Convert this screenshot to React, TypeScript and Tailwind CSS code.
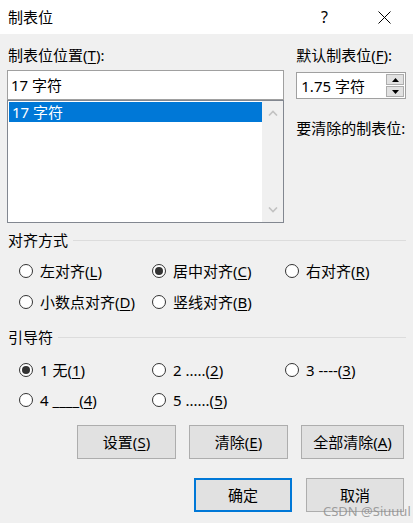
import { FC, ReactNode } from 'react'

const font = { fontFamily: '"Noto Sans", "Noto Sans CJK SC", sans-serif' }

// label text with an underlined access key, e.g. 左对齐(L)
const Key: FC<{ pre: string; k: string; post?: string }> = ({ pre, k, post = ')' }) => (
    <span>
        {pre}(<span className="underline underline-offset-2">{k}</span>{post}
    </span>
)

const Radio: FC<{ checked?: boolean; children: ReactNode }> = ({ checked, children }) => (
    <div className="flex items-center h-5 gap-[7px]">
        <span className="w-[14px] h-[14px] rounded-full border border-[#333] bg-white flex items-center justify-center shrink-0">
            {checked && <span className="w-[8px] h-[8px] rounded-full bg-[#333]" />}
        </span>
        <span className="leading-5">{children}</span>
    </div>
)

const GroupTitle: FC<{ title: string }> = ({ title }) => (
    <div className="flex items-center h-5 pl-px gap-[5px]">
        <span className="leading-5">{title}</span>
        <span className="flex-1 h-px bg-[#dcdcdc]" />
    </div>
)

const Button: FC<{ children: ReactNode; primary?: boolean; w: string }> = ({ children, primary, w }) => (
    <div
        className={`h-[34px] ${w} flex items-center justify-center bg-[#e1e1e1] ${
            primary ? 'border-2 border-[#0078d7]' : 'border border-[#adadad]'
        }`}
    >
        {children}
    </div>
)

const Chevron: FC<{ up?: boolean }> = ({ up }) => (
    <svg width="10" height="6" viewBox="0 0 10 6">
        <path d={up ? 'M1 5.5 L5 1.5 L9 5.5' : 'M1 0.5 L5 4.5 L9 0.5'} fill="none" stroke="#c2c2c2" strokeWidth="1.6" />
    </svg>
)

const App: FC = () => {
    return (
        <div className="w-[413px] h-[523px] bg-[#f0f0f0] text-[15px] text-black relative overflow-hidden" style={font}>
            {/* title bar */}
            <div className="h-[34px] bg-white flex items-center pl-2">
                <span className="flex-1 leading-5">制表位</span>
                <span className="w-[10px] text-[16px] leading-5 mr-[47px]">?</span>
                <svg width="13" height="13" viewBox="0 0 13 13" className="mr-[22px]">
                    <path d="M0.5 0.5 L12.5 12.5 M12.5 0.5 L0.5 12.5" stroke="#000" strokeWidth="1" />
                </svg>
            </div>

            <div className="px-[7px]">
                <div className="flex gap-[12px] pt-[11px]">
                    {/* left column */}
                    <div className="w-[278px]">
                        <div className="h-5 leading-5 pl-px">
                            <Key pre="制表位位置" k="T" post="):" />
                        </div>
                        <div className="mt-[5px] h-[30px] bg-white border border-[#a0a0a0] flex items-center px-[3px]">
                            17 字符
                        </div>
                        <div className="h-[123px] bg-white border border-[#828790] flex">
                            <div className="flex-1 pt-px pl-px">
                                <div className="h-5 bg-[#0078d7] text-white leading-5 pl-[3px]">17 字符</div>
                            </div>
                            <div className="w-[21px] bg-[#f0f0f0] flex flex-col items-center justify-between py-[9px]">
                                <Chevron up />
                                <Chevron />
                            </div>
                        </div>
                    </div>

                    {/* right column */}
                    <div className="w-[110px]">
                        <div className="h-5 leading-5">
                            <Key pre="默认制表位" k="F" post="):" />
                        </div>
                        <div className="mt-[7px] h-[27px] bg-white border border-[#a0a0a0] flex items-center">
                            <span className="flex-1 pl-[4px] leading-5">1.75 字符</span>
                            <div className="w-[20px] h-full flex flex-col gap-px p-px">
                                <div className="flex-1 bg-[#e1e1e1] border border-[#adadad] flex items-center justify-center">
                                    <svg width="7" height="4" viewBox="0 0 7 4"><path d="M0 4 L3.5 0 L7 4 Z" fill="#000" /></svg>
                                </div>
                                <div className="flex-1 bg-[#e1e1e1] border border-[#adadad] flex items-center justify-center">
                                    <svg width="7" height="4" viewBox="0 0 7 4"><path d="M0 0 L3.5 4 L7 0 Z" fill="#000" /></svg>
                                </div>
                            </div>
                        </div>
                        <div className="mt-[19px] h-5 leading-5">要清除的制表位:</div>
                    </div>
                </div>

                {/* alignment */}
                <div className="mt-[7px]">
                    <GroupTitle title="对齐方式" />
                    <div className="grid grid-cols-[133px_133px_1fr] pl-[12px] mt-[11px] gap-y-[11px]">
                        <Radio><Key pre="左对齐" k="L" /></Radio>
                        <Radio checked><Key pre="居中对齐" k="C" /></Radio>
                        <Radio><Key pre="右对齐" k="R" /></Radio>
                        <Radio><Key pre="小数点对齐" k="D" /></Radio>
                        <Radio><Key pre="竖线对齐" k="B" /></Radio>
                    </div>
                </div>

                {/* leader */}
                <div className="mt-[15px]">
                    <GroupTitle title="引导符" />
                    <div className="grid grid-cols-[133px_133px_1fr] pl-[12px] mt-[13px] gap-y-[10px]">
                        <Radio checked><Key pre="1 无" k="1" /></Radio>
                        <Radio><Key pre="2 ....." k="2" /></Radio>
                        <Radio><Key pre="3 ----" k="3" /></Radio>
                        <Radio><Key pre="4 ____" k="4" /></Radio>
                        <Radio><Key pre="5 ......" k="5" /></Radio>
                    </div>
                </div>

                {/* buttons */}
                <div className="mt-[15px] flex justify-end gap-[13px] pr-[2px]">
                    <Button w="w-[99px]"><Key pre="设置" k="S" /></Button>
                    <Button w="w-[99px]"><Key pre="清除" k="E" /></Button>
                    <Button w="w-[103px]"><Key pre="全部清除" k="A" /></Button>
                </div>
                <div className="mt-[19px] flex justify-end gap-[14px] pr-[2px]">
                    <Button primary w="w-[98px]">确定</Button>
                    <Button w="w-[98px]">取消</Button>
                </div>
            </div>

            {/* watermark */}
            <span className="absolute left-[323px] top-[503px] text-[13px] leading-4 text-[#8a8a8a]/80">CSDN @Siuuul</span>
        </div>
    )
}

export default App
